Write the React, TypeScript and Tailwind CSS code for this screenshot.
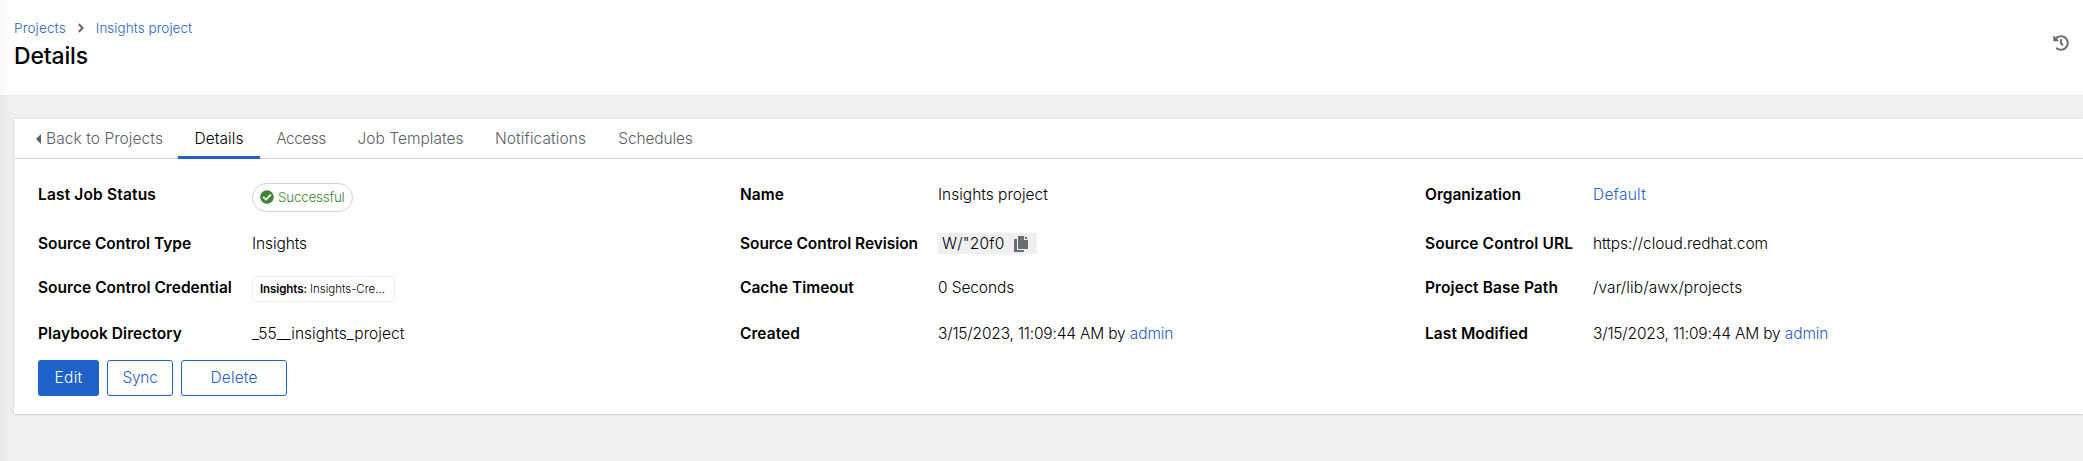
import type { ReactNode } from 'react';
import { FaAngleRight, FaCheckCircle, FaHistory } from 'react-icons/fa';

type Tab = { label: string; width: string; tracking: string };

const tabs: Tab[] = [
  { label: 'Access', width: 'w-[82px]', tracking: 'tracking-[-0.5px]' },
  { label: 'Job Templates', width: 'w-[137px]', tracking: 'tracking-[0.02px]' },
  { label: 'Notifications', width: 'w-[123px]', tracking: 'tracking-[0.07px]' },
  { label: 'Schedules', width: 'w-[107px]', tracking: 'tracking-[-0.13px]' },
];

function Term({ children, className = '' }: { children: ReactNode; className?: string }) {
  return <dt className={`pt-px font-semibold text-black ${className}`}>{children}</dt>;
}

function Link({ children, className = '' }: { children: ReactNode; className?: string }) {
  return <a className={`text-[#1f62c9] ${className}`}>{children}</a>;
}

function Value({ children, className = '' }: { children: ReactNode; className?: string }) {
  return <dd className={`pt-px ${className}`}>{children}</dd>;
}

function CopyIcon() {
  return (
    <svg viewBox="0 0 14 16" className="ml-[8px] h-4 w-[14px] fill-[#6a6e73]" aria-hidden="true">
      <path d="M0 3h3v11h7v2H0z" />
      <path d="M4 0h6v4h4v9H4z" />
      <path d="M11 0l3 3h-3z" />
    </svg>
  );
}

function Timestamp() {
  return (
    <Value>
      <span className="tracking-[-0.18px]">3/15/2023, 11:09:44 AM by</span>{' '}
      <Link className="tracking-[-0.12px]">admin</Link>
    </Value>
  );
}

export default function App() {
  return (
    <div className="relative flex h-[461px] w-full flex-col overflow-hidden bg-[#efefef] font-['Inter','Liberation_Sans',sans-serif] text-[15.5px] font-light leading-6 text-black">
      <header className="flex h-[95px] shrink-0 items-start justify-between bg-white pl-[14px] pr-[14px]">
        <div className="pt-[18px]">
          <nav className="flex h-5 items-center text-[13.5px] leading-5 text-[#1f62c9]">
            <a className="tracking-[0.16px]">Projects</a>
            <FaAngleRight className="ml-[8px] mr-[8px] size-[14px] text-[#6a6e73]" />
            <a className="tracking-[0.04px]">Insights project</a>
          </nav>
          <h1 className="mt-[3px] text-[23px] font-medium leading-[31px] tracking-[-0.16px] text-black">Details</h1>
        </div>
        <FaHistory className="mt-[35px] size-4 text-[#6a6e73]" />
      </header>

      <main className="ml-[14px] mt-6 flex h-[295px] flex-col bg-white shadow-[0_1px_2px_0_rgba(3,3,3,0.12),0_0_2px_0_rgba(3,3,3,0.06)]">
        <div className="flex h-10 shrink-0 border-b border-[#d2d2d2] text-[#5c6066]">
          <a className="flex w-[164px] items-center pl-[22px]">
            <svg viewBox="0 0 5 10" className="mr-[5px] h-[10px] w-[5px] fill-current" aria-hidden="true">
              <path d="M5 0v10L0 5z" />
            </svg>
            <span className="tracking-[0.07px]">Back to Projects</span>
          </a>
          <a className="-mb-px flex w-[82px] items-center justify-center border-b-3 border-[#1f62c9] pt-[2px] tracking-[0.06px] text-black">
            Details
          </a>
          {tabs.map((tab) => (
            <a key={tab.label} className={`flex items-center justify-center ${tab.width} ${tab.tracking}`}>
              {tab.label}
            </a>
          ))}
        </div>

        <dl className="mt-[23px] grid shrink-0 grid-cols-[214px_488px_198px_487px_168px_1fr] grid-rows-[49px_44px_46px_39px] pl-6">
          <Term className="tracking-[0.16px]">Last Job Status</Term>
          <Value>
            <span className="flex h-[29px] w-[101px] items-center rounded-full border border-[#d2d2d2] pb-px pl-[7px] text-[13.5px] tracking-[-0.26px] text-[#3e8635]">
              <FaCheckCircle className="mr-[4px] size-[14px]" />
              Successful
            </span>
          </Value>
          <Term>Name</Term>
          <Value>Insights project</Value>
          <Term>Organization</Term>
          <Value>
            <Link className="tracking-[0.23px]">Default</Link>
          </Value>

          <Term>Source Control Type</Term>
          <Value className="tracking-[-0.09px]">Insights</Value>
          <Term className="tracking-[-0.06px]">Source Control Revision</Term>
          <Value>
            <span className="mt-px flex h-[21px] w-[99px] items-center bg-[#efefef] pl-[4px]">
              <span className="w-[64px] tracking-[0.19px]">W/"20f0</span>
              <CopyIcon />
            </span>
          </Value>
          <Term className="tracking-[0.1px]">Source Control URL</Term>
          <Value className="tracking-[-0.06px]">https://cloud.redhat.com</Value>

          <Term className="tracking-[0.03px]">Source Control Credential</Term>
          <Value>
            <span className="flex h-[26px] w-[143px] items-center rounded-[3px] border border-[#efefef] pl-[7px] text-[11.5px]">
              <span className="mr-[3px] font-semibold tracking-[-0.08px]">Insights:</span>
              <span className="tracking-[-0.03px]">Insights-Cre...</span>
            </span>
          </Value>
          <Term>Cache Timeout</Term>
          <Value className="tracking-[-0.11px]">0 Seconds</Value>
          <Term className="tracking-[0.1px]">Project Base Path</Term>
          <Value className="tracking-[0.1px]">/var/lib/awx/projects</Value>

          <Term className="tracking-[0.07px]">Playbook Directory</Term>
          <Value className="tracking-[0.04px]">_55__insights_project</Value>
          <Term className="tracking-[0.06px]">Created</Term>
          <Timestamp />
          <Term className="tracking-[0.07px]">Last Modified</Term>
          <Timestamp />
        </dl>

        <div className="flex gap-2 pl-6">
          <button className="h-9 w-[61px] rounded-[3px] bg-[#1f62c9] tracking-[0.3px] text-white">Edit</button>
          <button className="h-9 w-[66px] rounded-[3px] border border-[#1f62c9] tracking-[-0.3px] text-[#1f62c9]">Sync</button>
          <button className="h-9 w-[106px] rounded-[3px] border border-[#1f62c9] tracking-[0.13px] text-[#1f62c9]">Delete</button>
        </div>
      </main>
      <div className="pointer-events-none absolute inset-y-0 left-0 w-[10px] bg-linear-to-r from-black/3 to-transparent" />
    </div>
  );
}
